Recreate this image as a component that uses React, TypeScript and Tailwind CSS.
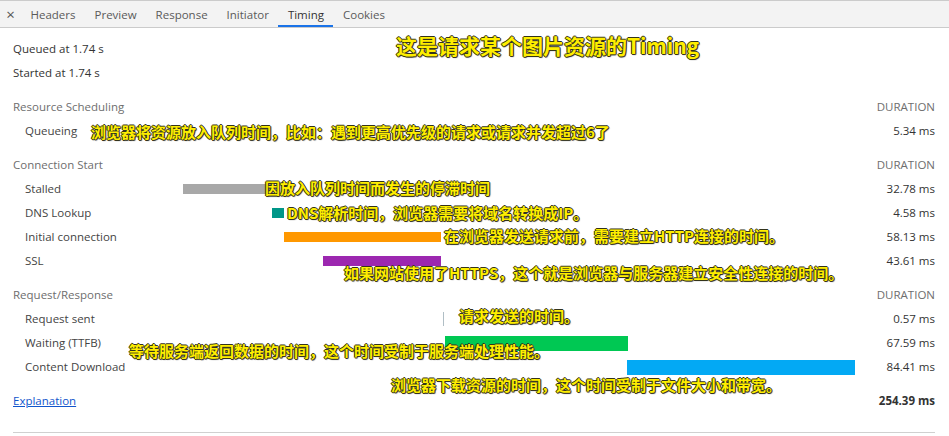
import React from 'react';

const SCALE = 2.705;

type Row = {
    label: string;
    start: number;
    dur: number;
    color: string;
    tall?: boolean;
    line?: boolean;
};

const sections: { title: string; rows: Row[] }[] = [
    {
        title: 'Resource Scheduling',
        rows: [{ label: 'Queueing', start: 0, dur: 5.34, color: '#ffffff' }],
    },
    {
        title: 'Connection Start',
        rows: [
            { label: 'Stalled', start: 5.34, dur: 32.78, color: '#a8a8a8' },
            { label: 'DNS Lookup', start: 38.12, dur: 4.58, color: '#009688' },
            { label: 'Initial connection', start: 42.7, dur: 58.13, color: '#ff9800' },
            { label: 'SSL', start: 57.22, dur: 43.61, color: '#9c27b0' },
        ],
    },
    {
        title: 'Request/Response',
        rows: [
            { label: 'Request sent', start: 101.4, dur: 0.57, color: '#b0bec5', line: true },
            { label: 'Waiting (TTFB)', start: 102.1, dur: 67.59, color: '#00c853', tall: true },
            { label: 'Content Download', start: 169.6, dur: 84.41, color: '#03a9f4', tall: true },
        ],
    },
];

const notes = [
    { text: '这是请求某个图片资源的Timing', x: 396, y: 35, big: true },
    { text: '浏览器将资源放入队列时间，比如：遇到更高优先级的请求或请求并发超过6了', x: 91, y: 124 },
    { text: '因放入队列时间而发生的停滞时间', x: 265, y: 180 },
    { text: 'DNS解析时间，浏览器需要将域名转换成IP。', x: 287, y: 205 },
    { text: '在浏览器发送请求前，需要建立HTTP连接的时间。', x: 444, y: 228 },
    { text: '如果网站使用了HTTPS，这个就是浏览器与服务器建立安全性连接的时间。', x: 344, y: 265 },
    { text: '请求发送的时间。', x: 459, y: 308 },
    { text: '等待服务端返回数据的时间，这个时间受制于服务端处理性能。', x: 129, y: 343 },
    { text: '浏览器下载资源的时间，这个时间受制于文件大小和带宽。', x: 391, y: 377 },
];

const tabs = ['Headers', 'Preview', 'Response', 'Initiator', 'Timing', 'Cookies'];

const fmt = (n: number) => `${n.toFixed(2)} ms`;

const App: React.FC = () => {
    return (
        <div className="relative w-[949px] h-[436px] bg-white overflow-hidden font-['Segoe_UI','Open_Sans',sans-serif] text-[11.5px] text-[#333]">
            {/* tab strip */}
            <div className="flex h-[28px] items-stretch bg-[#f3f3f3] border-t border-b border-[#cbcbcb]">
                <div className="w-[21px] pt-[1px] flex items-center justify-center text-[#555] text-[15px]">×</div>
                {tabs.map((t) => {
                    const active = t === 'Timing';
                    return (
                        <div
                            key={t}
                            className={`px-[9.5px] pt-[3px] flex items-center border-b-2 ${
                                active ? 'border-[#1a73e8] text-[#333]' : 'border-transparent text-[#5a5a5a]'
                            }`}
                        >
                            {t}
                        </div>
                    );
                })}
            </div>

            <div className="pl-[13px] pr-[14px] pt-[9px]">
                <div className="h-[24px] flex items-center">Queued at 1.74 s</div>
                <div className="h-[24px] flex items-center">Started at 1.74 s</div>

                {sections.map((s) => (
                    <div key={s.title} className="mt-[10px]">
                        <div className="h-[24px] flex items-center justify-between text-[#6e6e6e]">
                            <span>{s.title}</span>
                            <span className="text-[11.5px]">DURATION</span>
                        </div>
                        {s.rows.map((r) => (
                            <div key={r.label} className="h-[24px] flex items-center">
                                <div className="w-[155px] pl-[12px] text-[#444]">{r.label}</div>
                                <div className="flex-1 flex items-center h-full">
                                    <div
                                        className={r.line ? 'h-[14px]' : r.tall ? 'h-[15px]' : 'h-[10px]'}
                                        style={{
                                            marginLeft: 0.6 + r.start * SCALE,
                                            width: r.line ? 1 : r.dur * SCALE,
                                            background: r.color,
                                        }}
                                    />
                                </div>
                                <div className="w-[80px] text-right">{fmt(r.dur)}</div>
                            </div>
                        ))}
                    </div>
                ))}

                <div className="mt-[10px] h-[24px] flex items-center justify-between">
                    <span className="text-[#1155cc] underline">Explanation</span>
                    <span className="font-bold">254.39 ms</span>
                </div>
                <div className="mt-[19px] border-t border-[#d0d0d0]" />
            </div>

            {/* yellow annotations laid over the screenshot */}
            {notes.map((n) => (
                <div
                    key={n.text}
                    className={`absolute whitespace-nowrap leading-none font-bold text-[#ffee00] font-['Noto_Sans_CJK_SC',sans-serif] [text-shadow:1px_0_0_#33331a,-1px_0_0_#33331a,0_1px_0_#33331a,0_-1px_0_#33331a,1px_1px_1px_#444] ${
                        n.big ? 'text-[21px]' : 'text-[15px]'
                    }`}
                    style={{ left: n.x, top: n.y }}
                >
                    {n.text}
                </div>
            ))}
        </div>
    );
};

export default App;
